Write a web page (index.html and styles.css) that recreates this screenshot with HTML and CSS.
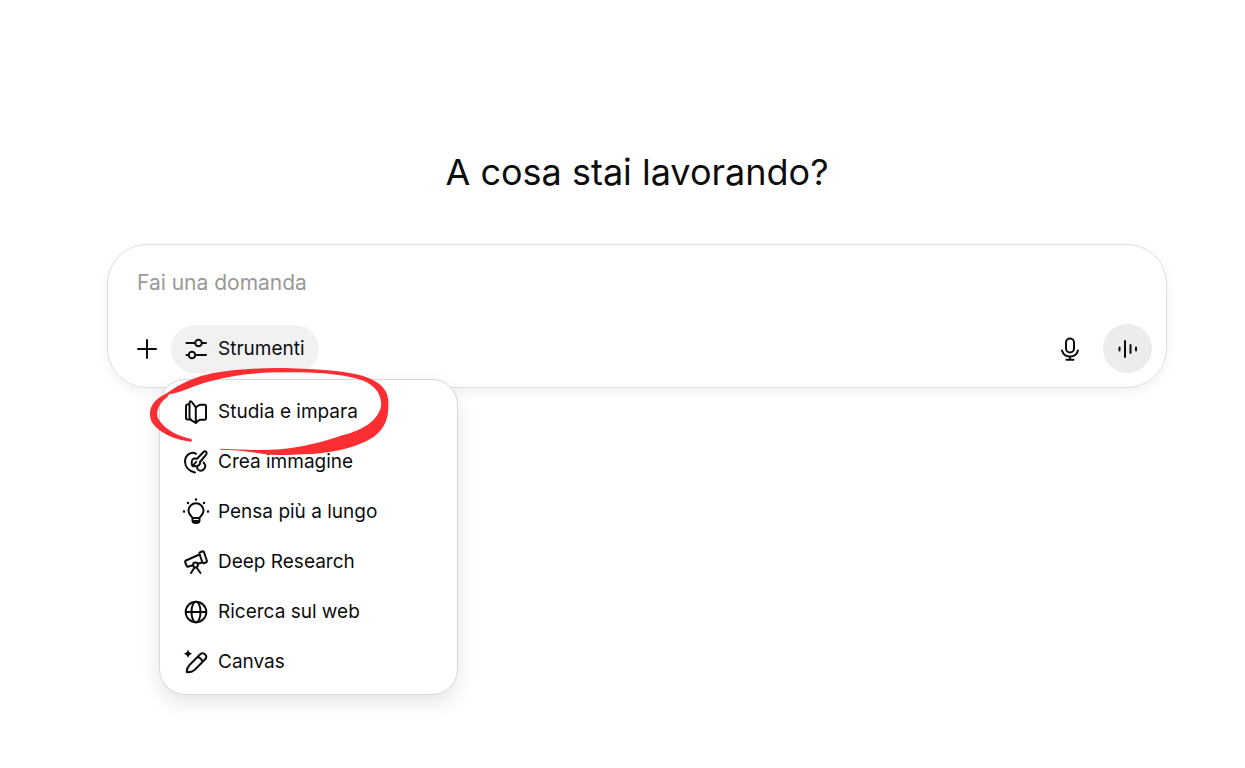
FILE: index.html
```
<!DOCTYPE html>
<html lang="it">
<head>
    <meta charset="UTF-8">
    <title>A cosa stai lavorando?</title>
    <link rel="stylesheet" href="styles.css">
</head>
<body>
    <main>
        <h1>A cosa stai lavorando?</h1>
        <form class="composer">
            <input type="text" class="prompt" placeholder="Fai una domanda" aria-label="Fai una domanda">
            <div class="toolbar">
                <button type="button" class="icon-button" aria-label="Aggiungi">
                    <svg viewBox="0 0 24 24"><path d="M12 3v18M3 12h18"/></svg>
                </button>
                <div class="tools">
                    <button type="button" class="tools-button">
                        <svg viewBox="0 0 24 24"><path d="M2.500 6h8.500M18 6h4M2.500 18h2M11.500 18H22"/><circle cx="14.500" cy="6" r="3.300"/><circle cx="8" cy="18" r="3.300"/></svg>
                        Strumenti
                    </button>
                    <div class="menu">
                        <button type="button">
                            <svg viewBox="0 0 24 24"><path d="M5.500 4.500H3.200Q2 4.500 2 6v12Q2 19.500 3.500 19.500H7M11.800 23V8.500q0-1.500-1-2.700L7.800 2Q5.500.2 5.500 3v14q0 1.800 1.200 2.800ZM12 7.200l2.500-1.700q1-.8 2.500-.8h3.500Q22 4.700 22 6v12.500q0 1.300-1.500 1.300H17q-1.500 0-2.500.8L11.800 23"/></svg>
                            Studia e impara
                        </button>
                        <button type="button">
                            <svg viewBox="0 0 24 24"><path d="M12 3.800C7.500.8 1 5 1 11.500c0 5 3.500 9.500 10 11M19.500 12.500c4.500 4.500-1 10-5 7.500-1.200-.8-1.600-1.800-1.400-3.300M8.500 16c-1-1.500-1.200-5 0-6.500 1-1.200 3-1.200 4.500-.7L19.500 2c2-1.800 4 .3 2.800 2.300L16 12c.2 2-.8 3.500-2.700 4-1.500.4-3.300.4-4.800 0ZM8.700 15.800l3.500-4"/></svg>
                            Crea immagine
                        </button>
                        <button type="button">
                            <svg viewBox="0 0 24 24"><path d="M8.500 18c0-1.500-4-3-4-7.200a7.500 7.500 0 0 1 15 0c0 4.200-4 5.700-4 7.200ZM8.500 18v2.500Q8.500 23 12 23t3.500-2.500V18"/><path class="solid" d="M8.500 20h7q0 3-3.500 3t-3.500-3Z"/><path class="rays" d="M12-.5v.1M4 3v.1M20 3v.1M0 11.500v.1M24 11.500v.1"/></svg>
                            Pensa più a lungo
                        </button>
                        <button type="button">
                            <svg viewBox="0 0 24 24"><path d="M2 10.500 15.500 4.500M18 12.500l-4.500 1.300M9 15.200 4.500 16.500q-1.500.5-2-1L1.200 12.500q-.5-1.400.8-2M15.500 4q-.5-1.300.8-1.800l1.800-.7q1.500-.5 2 1l2.700 8q.5 1.500-1 2l-1.500.5q-1.500.5-2-1ZM10.500 17.500 7 23M12.500 17.500l4 5.500"/><circle cx="11.500" cy="15" r="2.400"/></svg>
                            Deep Research
                        </button>
                        <button type="button">
                            <svg viewBox="0 0 24 24"><circle cx="12" cy="12" r="10.300"/><ellipse cx="12" cy="12" rx="4.500" ry="10.300"/><path d="M2 12h20"/></svg>
                            Ricerca sul web
                        </button>
                        <button type="button">
                            <svg viewBox="0 0 24 24"><path d="M3.500 22.300q-.8 0-.7-.8c0-3 .7-4.500 2.700-6.500L16.200 4.300c3.500-3 8 1.500 5 5L10.500 20c-2 1.800-4 2.300-7 2.300ZM13.500 7q4 .8 5 5"/><path class="solid" d="M4-.8q.8 3.800 4.500 4.500Q4.800 4.500 4 8.200 3.200 4.500-.5 3.700 3.200 3 4-.8Z"/></svg>
                            Canvas
                        </button>
                        <!-- hand-drawn ring round the first entry -->
                        <svg class="marker" viewBox="0 0 750 345" aria-hidden="true"><path d="M140 230C95 226 45 205 24 172C7 138 25 105 68 85C110 55 155 35 205 25C290 10 370 8 440 10C540 13 610 20 655 32C700 46 730 68 733 105C735 150 729 185 690 215C630 254 550 265 480 268C430 271 390 271 360 267C310 258 270 255 228 254L230 251C290 254 350 257 410 253C480 245 540 230 590 212C650 198 700 170 711 125C715 85 690 55 640 41C570 22 480 20 390 22C320 25 260 31 205 47C150 60 110 84 76 87L70 96C42 116 35 145 42 160C60 192 95 212 142 222Q147 227 140 230Z"/></svg>
                    </div>
                </div>
                <button type="button" class="icon-button mic" aria-label="Dettatura">
                    <svg viewBox="0 0 24 24"><rect x="8" y="1.500" width="8" height="14" rx="4"/><path d="M4 13.500c1 3.500 4 6 8 6s7-2.500 8-6M12 19.500v3M8.500 22.800h7"/></svg>
                </button>
                <button type="button" class="voice-button" aria-label="Modalità vocale">
                    <svg viewBox="0 0 24 24"><path d="M3.500 10.500v3M9 4v16M14.500 8v8M20 10.500v3"/></svg>
                </button>
            </div>
        </form>
    </main>
</body>
</html>
```

FILE: styles.css
```
* {
    box-sizing: border-box;
}
body {
    margin: 0;
    min-height: 100vh;
    background: #fff;
    color: #0d0d0d;
    font-family: Inter, "Liberation Sans", sans-serif;
}
main {
    padding: 148px 78px 40px 107px;
}
h1 {
    margin: 0 0 48px;
    font-size: 36px;
    line-height: 48px;
    font-weight: 400;
    text-align: center;
}
button {
    padding: 0;
    border: none;
    background: transparent;
    color: inherit;
    font: inherit;
    cursor: pointer;
}
svg {
    display: block;
    flex: none;
    width: 24px;
    height: 24px;
    overflow: visible;
    fill: none;
    stroke: currentColor;
    stroke-width: 2;
    stroke-linecap: round;
    stroke-linejoin: round;
}
.solid {
    fill: currentColor;
    stroke: none;
}
.rays {
    stroke-width: 2.5;
}
.composer {
    padding: 20px 14px 14px;
    border: 1px solid #dedede;
    border-radius: 40px;
    box-shadow: 0 4px 12px rgba(0, 0, 0, 0.06);
}
.prompt {
    display: block;
    width: 100%;
    height: 35px;
    margin-bottom: 24px;
    padding: 0 15px;
    border: none;
    outline: none;
    background: transparent;
    font: 21px Inter, "Liberation Sans", sans-serif;
}
.prompt::placeholder {
    color: #999;
    opacity: 1;
}
.toolbar {
    display: flex;
    align-items: center;
    font-size: 19px;
}
.icon-button {
    display: grid;
    place-items: center;
    width: 49px;
    height: 49px;
}
.tools {
    position: relative;
}
.tools-button {
    display: flex;
    align-items: center;
    gap: 10px;
    height: 48px;
    padding: 0 14px 0 13px;
    border-radius: 24px;
    background: #f1f1f1;
}
.mic {
    margin-left: auto;
}
.voice-button {
    display: grid;
    place-items: center;
    width: 49px;
    height: 49px;
    margin-left: 9px;
    border-radius: 50%;
    background: #ececec;
}
.menu {
    position: absolute;
    top: 54px;
    left: -12px;
    width: 299px;
    padding: 7px;
    border: 1px solid #d8d8d8;
    border-radius: 26px;
    background: #fff;
    box-shadow: 0 8px 20px rgba(0, 0, 0, 0.1);
}
.menu button {
    display: flex;
    align-items: center;
    gap: 10px;
    width: 100%;
    height: 50px;
    padding: 0 17px;
}
.marker {
    position: absolute;
    top: -15px;
    left: -16px;
    width: 250px;
    height: 115px;
    fill: #fb2f33;
    stroke: none;
    pointer-events: none;
}
```
